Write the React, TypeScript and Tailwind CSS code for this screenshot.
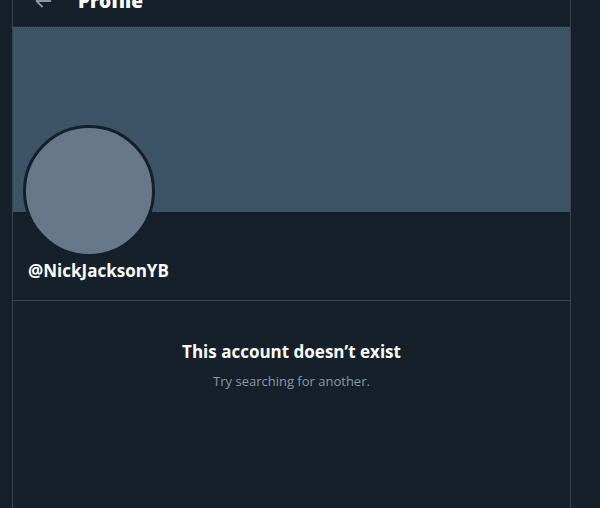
import React from 'react';

const BackArrow = () => (
  <svg viewBox="0 0 24 24" className="h-[22px] w-[22px] fill-[#8899a6]">
    <path d="M20 11H7.414l4.293-4.293a1 1 0 0 0-1.414-1.414l-6 6a1 1 0 0 0 0 1.414l6 6a1 1 0 0 0 1.414-1.414L7.414 13H20a1 1 0 1 0 0-2z" />
  </svg>
);

const App = () => {
  return (
    <div
      className="flex h-[508px] w-[600px] overflow-hidden bg-[#15202b] text-white"
      style={{ fontFamily: '"Open Sans", "Noto Sans", sans-serif' }}
    >
      <div className="w-[12px] shrink-0" />
      <main className="flex w-[559px] shrink-0 flex-col border-x border-[#38444d]">
        <header className="relative h-[27px] shrink-0 border-b border-dotted border-[#2c3a46]">
          <div className="-mt-[12px] flex items-center gap-[24px] pl-[19px]">
            <BackArrow />
            <h2 className="text-[19px] font-extrabold leading-[26px]">Profile</h2>
          </div>
        </header>
        <div className="h-[185px] shrink-0 bg-[#3d5466]" />
        <div className="relative flex h-[89px] shrink-0 flex-col justify-end border-b border-[#38444d] px-[15px] pb-[19px]">
          <div className="absolute left-[10px] top-[-87px] h-[132px] w-[132px] rounded-full border-[3px] border-[#15202b] bg-[#66788a]" />
          <p className="text-[17px] font-bold leading-[21px]">@NickJacksonYB</p>
        </div>
        <section className="flex flex-col items-center pt-[40px]">
          <h3 className="text-[17px] font-bold leading-[22px]">This account doesn’t exist</h3>
          <p className="mt-[9px] text-[13px] leading-[18px] text-[#8899a6]">Try searching for another.</p>
        </section>
      </main>
      <div className="flex-1" />
    </div>
  );
};

export default App;
